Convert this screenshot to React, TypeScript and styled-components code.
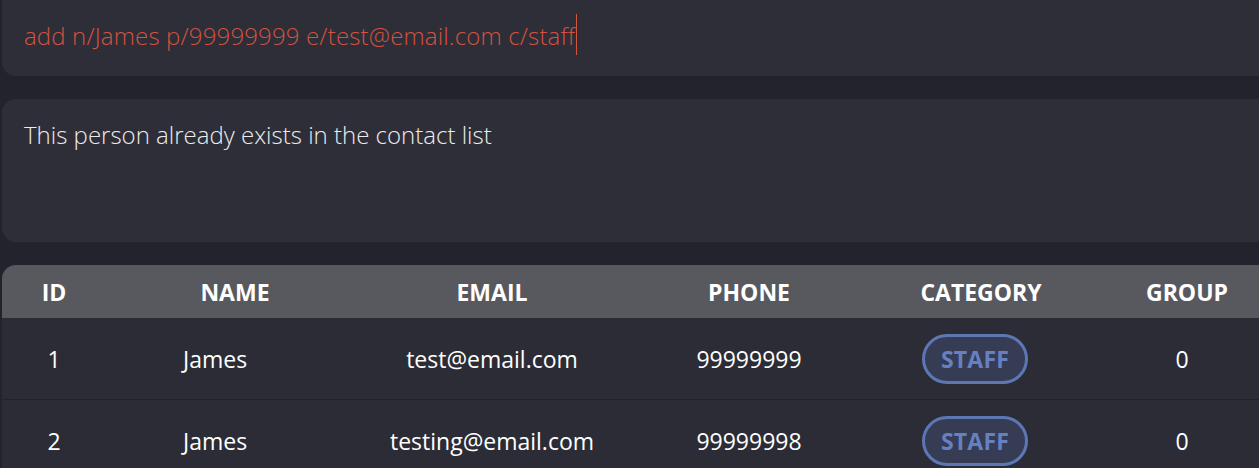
import React from "react";
import styled, { createGlobalStyle } from "styled-components";

const Global = createGlobalStyle`
  html, body { margin: 0; padding: 0; background: #23232d; overflow: hidden; }
  #root { width: 1259px; height: 468px; overflow: hidden; }
`;

const Page = styled.div`
  display: flex;
  flex-direction: column;
  gap: 23px;
  padding-left: 2px;
  margin-right: -40px;
  font-family: "Open Sans", "Liberation Sans", sans-serif;
`;

const CommandBox = styled.div`
  margin-top: -16px;
  height: 92px;
  background: #2e2e38;
  border-radius: 14px;
  display: flex;
  align-items: center;
  padding: 16px 22px 0;
  box-sizing: border-box;
`;

const CommandText = styled.span`
  font-size: 24px;
  font-weight: 300;
  color: #d4523f;
  letter-spacing: 0.15px;
`;

const Caret = styled.span`
  display: inline-block;
  width: 1px;
  height: 41px;
  background: #d4523f;
  vertical-align: middle;
  margin-left: 1px;
  position: relative;
  top: -4px;
`;

const ResultBox = styled.div`
  height: 143px;
  background: #2e2e38;
  border-radius: 14px;
  padding: 19px 22px;
  box-sizing: border-box;
  font-size: 24px;
  font-weight: 300;
  color: #ececec;
`;

const Table = styled.div`
  border-radius: 14px 0 0 0;
  overflow: hidden;
  background: #2c2c36;
`;

const cols = "104px 258px 256px 258px 206px 206px 1fr";

const HeaderRow = styled.div`
  display: grid;
  grid-template-columns: ${cols};
  height: 53px;
  align-items: center;
  background: #58595e;
`;

const HeaderCell = styled.div`
  text-align: center;
  font-size: 23px;
  font-weight: 700;
  color: #ffffff;
`;

const BodyRow = styled.div`
  display: grid;
  grid-template-columns: ${cols};
  height: 82px;
  align-items: center;
  border-bottom: 1px solid #23232d;
  box-sizing: border-box;
`;

const Cell = styled.div<{ $align?: "left" | "center"; $shift?: number }>`
  font-size: 23px;
  font-weight: 400;
  color: #ffffff;
  display: flex;
  justify-content: ${(p) => (p.$align === "left" ? "flex-start" : "center")};
  padding-left: ${(p) => (p.$align === "left" ? "77px" : "0")};
  padding-right: ${(p) => (p.$shift ? `${p.$shift}px` : "0")};
`;

const Badge = styled.span`
  display: inline-flex;
  align-items: center;
  justify-content: center;
  width: 106px;
  height: 50px;
  box-sizing: border-box;
  border: 3px solid #5d77b5;
  border-radius: 25px;
  background: #363c54;
  color: #6681c2;
  font-size: 23px;
  font-weight: 700;
  letter-spacing: 0.2px;
`;

const rows = [
  { id: 1, name: "James", email: "test@email.com", phone: "99999999", cat: "STAFF", group: 0 },
  { id: 2, name: "James", email: "testing@email.com", phone: "99999998", cat: "STAFF", group: 0 },
];

export default function App() {
  return (
    <>
      <Global />
      <Page>
        <CommandBox>
          <CommandText>
            add n/James p/99999999 e/test@email.com c/staff
            <Caret />
          </CommandText>
        </CommandBox>
        <ResultBox>This person already exists in the contact list</ResultBox>
        <Table>
          <HeaderRow>
            <HeaderCell>ID</HeaderCell>
            <HeaderCell>NAME</HeaderCell>
            <HeaderCell>EMAIL</HeaderCell>
            <HeaderCell>PHONE</HeaderCell>
            <HeaderCell>CATEGORY</HeaderCell>
            <HeaderCell>GROUP</HeaderCell>
            <HeaderCell />
          </HeaderRow>
          {rows.map((r) => (
            <BodyRow key={r.id}>
              <Cell>{r.id}</Cell>
              <Cell $align="left">{r.name}</Cell>
              <Cell>{r.email}</Cell>
              <Cell>{r.phone}</Cell>
              <Cell $shift={12}>
                <Badge>{r.cat}</Badge>
              </Cell>
              <Cell $shift={10}>{r.group}</Cell>
              <Cell />
            </BodyRow>
          ))}
        </Table>
      </Page>
    </>
  );
}
